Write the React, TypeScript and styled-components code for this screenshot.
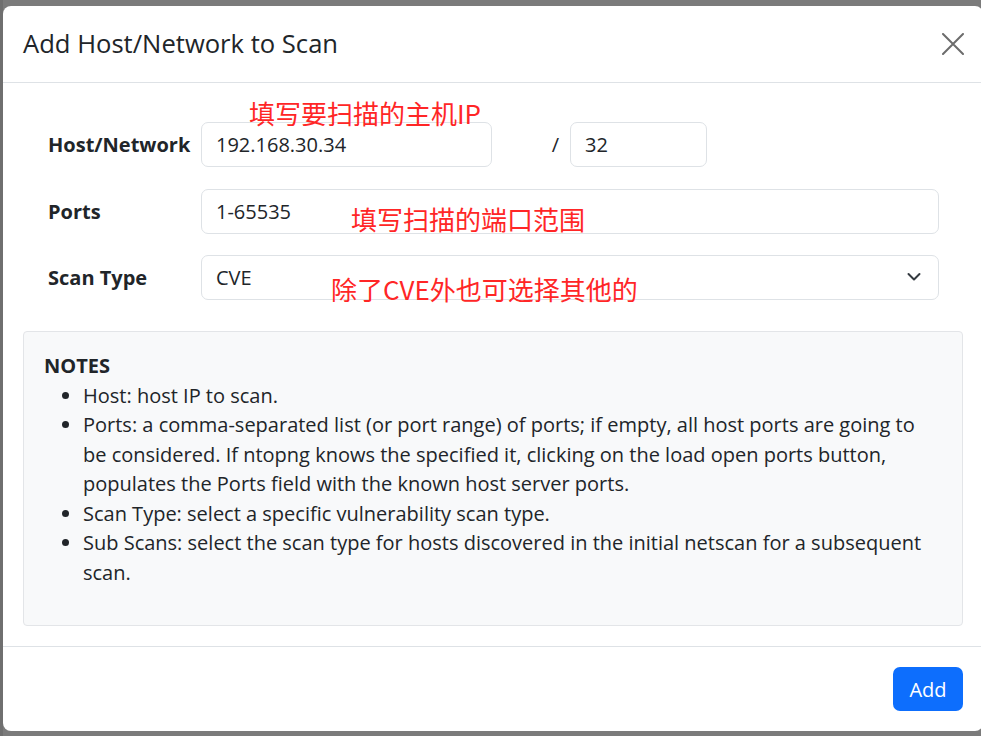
import React from "react";
import styled, { createGlobalStyle } from "styled-components";

const GlobalStyle = createGlobalStyle`
  html, body { margin: 0; padding: 0; }
  body {
    background: #7b7b7b;
    font-family: "Open Sans", "Noto Sans", "Noto Sans CJK SC", sans-serif;
    color: #212529;
  }
  * { box-sizing: border-box; }
`;

const Backdrop = styled.div`
  width: 981px;
  height: 736px;
  overflow: hidden;
  padding: 6px 0 0 3px;
  background: linear-gradient(to right, #6f6f6f 0, #6f6f6f 3px, #7b7b7b 3px);
`;

const Modal = styled.div`
  position: relative;
  width: 980px;
  height: 725px;
  background: #fff;
  border-radius: 8px;
  display: flex;
  flex-direction: column;
`;

const Header = styled.div`
  height: 77px;
  flex: none;
  display: flex;
  align-items: center;
  justify-content: space-between;
  padding: 0 19px 0 20px;
  border-bottom: 1px solid #dee2e6;
`;

const Title = styled.h5`
  margin: 0;
  font-size: 25.6px;
  font-weight: 400;
  color: #212529;
  line-height: 1.2;
`;

const CloseButton = styled.button`
  width: 22px;
  height: 22px;
  padding: 0;
  border: 0;
  background: transparent;
  display: flex;
  align-items: center;
  justify-content: center;
  cursor: pointer;
`;

const Body = styled.div`
  flex: 1;
  padding: 20px;
`;

const Form = styled.div`
  display: flex;
  flex-direction: column;
  gap: 21.5px;
  padding: 19px 24px 0 25px;
`;

const Row = styled.div`
  display: flex;
  align-items: center;
  height: 45px;
`;

const Label = styled.label`
  width: 153px;
  flex: none;
  font-size: 20px;
  font-weight: 700;
  color: #212529;
`;

const Input = styled.input<{ $w?: number }>`
  height: 45px;
  width: ${(p) => (p.$w ? `${p.$w}px` : "auto")};
  flex: ${(p) => (p.$w ? "none" : "1")};
  min-width: 0;
  padding: 0 14px;
  font-family: inherit;
  font-size: 20px;
  color: #212529;
  background: #fff;
  border: 1px solid #dee2e6;
  border-radius: 7px;
  outline: none;
`;

const Slash = styled.span`
  width: 78px;
  flex: none;
  text-align: right;
  padding-right: 11px;
  font-size: 20px;
  color: #212529;
`;

const SelectWrap = styled.div`
  position: relative;
  flex: 1;
  display: flex;
`;

const Select = styled.select`
  flex: 1;
  height: 45px;
  padding: 0 40px 0 14px;
  font-family: inherit;
  font-size: 20px;
  color: #212529;
  background: #fff;
  border: 1px solid #dee2e6;
  border-radius: 7px;
  appearance: none;
  -webkit-appearance: none;
  outline: none;
`;

const Chevron = styled.svg`
  position: absolute;
  right: 18px;
  top: 17px;
  pointer-events: none;
`;

const Notes = styled.div`
  margin-top: 31px;
  height: 295px;
  background: #f8f9fa;
  border: 1px solid #e3e5e8;
  border-radius: 4px;
  padding: 19px 20px 20px 20px;
  font-size: 20px;
  line-height: 29.5px;
  color: #212529;
`;

const NotesTitle = styled.div`
  font-weight: 700;
`;

const List = styled.ul`
  margin: 0 0 19px 0;
  padding-left: 39px;
`;

const Footer = styled.div`
  height: 85px;
  flex: none;
  border-top: 1px solid #dee2e6;
  display: flex;
  align-items: center;
  justify-content: flex-end;
  padding: 0 20px;
`;

const AddButton = styled.button`
  height: 44px;
  width: 70px;
  border: 0;
  border-radius: 7px;
  background: #0d6efd;
  color: #fff;
  font-family: inherit;
  font-size: 20px;
  cursor: pointer;
`;

const Annotation = styled.span<{ $x: number; $y: number }>`
  position: absolute;
  left: ${(p) => p.$x}px;
  top: ${(p) => p.$y}px;
  font-family: "Noto Sans CJK SC", sans-serif;
  font-size: 26px;
  line-height: 26px;
  color: #ff2626;
  white-space: nowrap;
  pointer-events: none;
`;

export default function App() {
  return (
    <>
      <GlobalStyle />
      <Backdrop>
        <Modal>
          <Header>
            <Title>Add Host/Network to Scan</Title>
            <CloseButton aria-label="Close">
              <svg width="22" height="22" viewBox="0 0 22 22">
                <path d="M1 1 L21 21 M21 1 L1 21" stroke="#6c6c6c" strokeWidth="2" strokeLinecap="round" />
              </svg>
            </CloseButton>
          </Header>
          <Body>
            <Form>
              <Row>
                <Label>Host/Network</Label>
                <Input $w={291} defaultValue="192.168.30.34" />
                <Slash>/</Slash>
                <Input $w={137} defaultValue="32" />
              </Row>
              <Row>
                <Label>Ports</Label>
                <Input defaultValue="1-65535" />
              </Row>
              <Row>
                <Label>Scan Type</Label>
                <SelectWrap>
                  <Select defaultValue="cve">
                    <option value="cve">CVE</option>
                    <option value="tcp">TCP Portscan</option>
                    <option value="udp">UDP Portscan</option>
                  </Select>
                  <Chevron width="14" height="10" viewBox="0 0 14 10">
                    <path d="M1.5 2 L7 7.5 L12.5 2" fill="none" stroke="#343a40" strokeWidth="2" strokeLinecap="round" strokeLinejoin="round" />
                  </Chevron>
                </SelectWrap>
              </Row>
            </Form>
            <Notes>
              <NotesTitle>NOTES</NotesTitle>
              <List>
                <li>Host: host IP to scan.</li>
                <li>
                  Ports: a comma-separated list (or port range) of ports; if empty, all host ports are going to be
                  considered. If ntopng knows the specified it, clicking on the load open ports button, populates the
                  Ports field with the known host server ports.
                </li>
                <li>Scan Type: select a specific vulnerability scan type.</li>
                <li>
                  Sub Scans: select the scan type for hosts discovered in the initial netscan for a subsequent scan.
                </li>
              </List>
            </Notes>
          </Body>
          <Footer>
            <AddButton>Add</AddButton>
          </Footer>
          <Annotation $x={246} $y={94}>填写要扫描的主机IP</Annotation>
          <Annotation $x={348} $y={200}>填写扫描的端口范围</Annotation>
          <Annotation $x={328} $y={270}>除了CVE外也可选择其他的</Annotation>
        </Modal>
      </Backdrop>
    </>
  );
}
